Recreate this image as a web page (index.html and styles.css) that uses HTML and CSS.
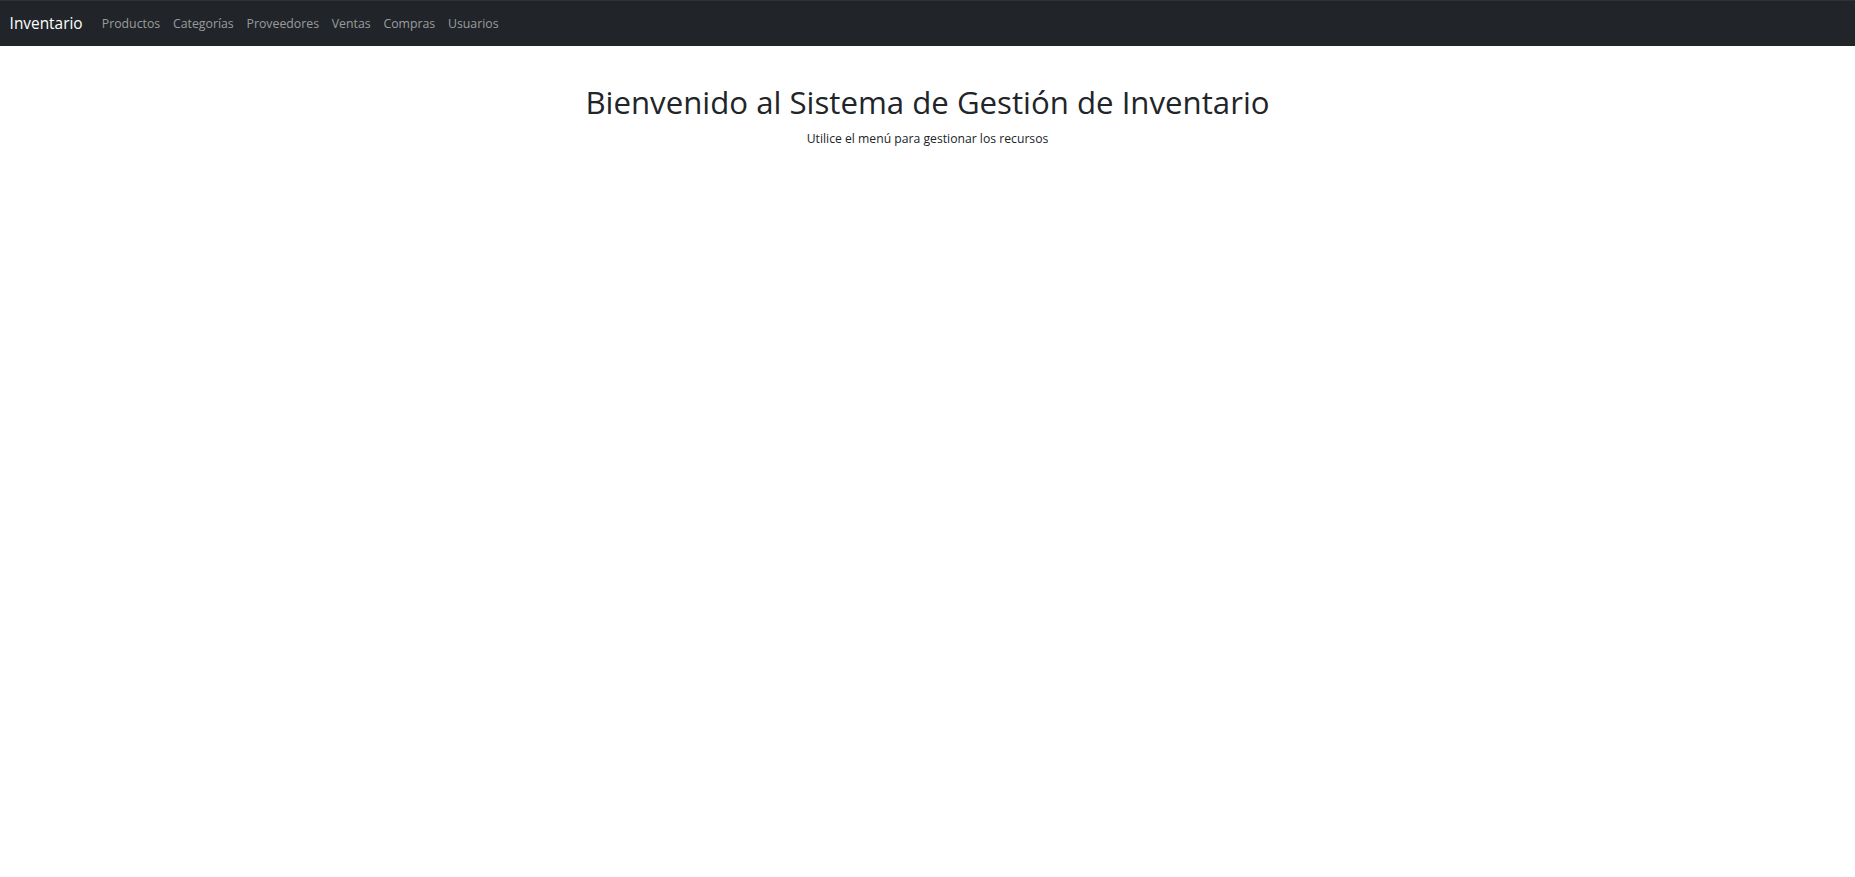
FILE: index.html
```html
<!DOCTYPE html>
<html lang="es">
<head>
<meta charset="utf-8">
<title>Inventario</title>
<link rel="stylesheet" href="styles.css">
</head>
<body>
<nav class="navbar">
  <div class="navbar-inner">
    <a class="brand" href="#">Inventario</a>
    <ul class="nav">
      <li><a class="nav-link" href="#">Productos</a></li>
      <li><a class="nav-link" href="#">Categorías</a></li>
      <li><a class="nav-link" href="#">Proveedores</a></li>
      <li><a class="nav-link" href="#">Ventas</a></li>
      <li><a class="nav-link" href="#">Compras</a></li>
      <li><a class="nav-link" href="#">Usuarios</a></li>
    </ul>
  </div>
</nav>
<main class="container">
  <h1 class="title">Bienvenido al Sistema de Gestión de Inventario</h1>
  <p class="subtitle">Utilice el menú para gestionar los recursos</p>
</main>
</body>
</html>
```

FILE: styles.css
```css
* { box-sizing: border-box; }
html, body {
  margin: 0;
  padding: 0;
  background: #fff;
}
body {
  font-family: "Open Sans", "Noto Sans", sans-serif;
  font-size: 12.8px;
  line-height: 1.5;
  color: #212529;
}
.navbar {
  background: #212529;
  border-top: 1px solid #2e3236;
  height: 46px;
  display: flex;
  align-items: center;
}
.navbar-inner {
  display: flex;
  align-items: center;
  padding: 0 9.6px;
  width: 100%;
}
.brand {
  color: #fff;
  text-decoration: none;
  font-size: 15.4px;
  margin-right: 12.8px;
  line-height: 24px;
}
.nav {
  list-style: none;
  margin: 0;
  padding: 0;
  display: flex;
}
.nav-link {
  display: block;
  padding: 7px 6.4px 5px;
  color: rgba(255, 255, 255, 0.55);
  text-decoration: none;
  font-size: 12.3px;
}
.container {
  text-align: center;
  padding: 38px 12px 0;
}
.title {
  font-weight: 400;
  font-size: 31.2px;
  line-height: 1.2;
  margin: 0 0 9px;
}
.subtitle {
  margin: 0;
  font-size: 12.2px;
}
```
